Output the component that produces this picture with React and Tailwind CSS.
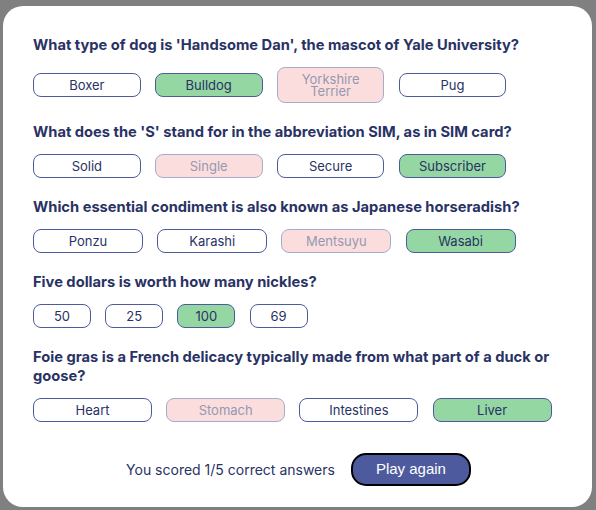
const questions = [
  {
    q: "What type of dog is 'Handsome Dan', the mascot of Yale University?",
    w: "w-[107.7px]",
    answers: [
      { text: "Boxer" },
      { text: "Bulldog", state: "correct" },
      { text: "Yorkshire Terrier", state: "wrong" },
      { text: "Pug" },
    ],
  },
  {
    q: "What does the 'S' stand for in the abbreviation SIM, as in SIM card?",
    w: "w-[107.7px]",
    answers: [
      { text: "Solid" },
      { text: "Single", state: "wrong" },
      { text: "Secure" },
      { text: "Subscriber", state: "correct" },
    ],
  },
  {
    q: "Which essential condiment is also known as Japanese horseradish?",
    w: "w-[110px]",
    answers: [
      { text: "Ponzu" },
      { text: "Karashi" },
      { text: "Mentsuyu", state: "wrong" },
      { text: "Wasabi", state: "correct" },
    ],
  },
  {
    q: "Five dollars is worth how many nickles?",
    w: "w-[58px]",
    answers: [
      { text: "50" },
      { text: "25" },
      { text: "100", state: "correct" },
      { text: "69" },
    ],
  },
  {
    q: "Foie gras is a French delicacy typically made from what part of a duck or goose?",
    w: "w-[119px]",
    answers: [
      { text: "Heart" },
      { text: "Stomach", state: "wrong" },
      { text: "Intestines" },
      { text: "Liver", state: "correct" },
    ],
  },
];

function Answer({ text, state, w }) {
  let look = "bg-white";
  if (state === "correct") look = "bg-[#94D7A2]";
  if (state === "wrong") look = "bg-[#F8BCBC] opacity-50";

  return (
    <div
      className={`${w} ${look} border border-[#4D5B9E] rounded-lg px-2 py-[5px] text-center text-[13px] leading-[12px] text-[#293264]`}
    >
      {text}
    </div>
  );
}

export default function App() {
  return (
    <div
      className="min-h-[510px] bg-[#808080] pt-[6px] pl-[3px] pr-[4px] pb-[3px]"
      style={{ fontFamily: "Inter, 'Noto Sans', sans-serif" }}
    >
      <div className="bg-white rounded-[20px] px-[30px] pt-[30px] pb-[21px] flex flex-col">
        <div className="flex flex-col gap-[20px]">
          {questions.map((item) => (
            <div key={item.q}>
              <h2 className="text-[14.7px] leading-[19px] font-bold text-[#293264] mb-3">
                {item.q}
              </h2>
              <div className="flex items-center gap-[14.2px]">
                {item.answers.map((a) => (
                  <Answer key={a.text} text={a.text} state={a.state} w={item.w} />
                ))}
              </div>
            </div>
          ))}
        </div>

        {/* score + replay */}
        <div className="flex items-center justify-center gap-4 mt-[31px] pl-[2px]">
          <span className="text-[14px] text-[#293264]">You scored 1/5 correct answers</span>
          <button
            className="w-[120px] h-[33px] rounded-[15px] bg-[#4D5B9E] border-2 border-black text-white text-[15px]"
            style={{ fontFamily: "'Liberation Sans', Arial, sans-serif" }}
          >
            Play again
          </button>
        </div>
      </div>
    </div>
  );
}
